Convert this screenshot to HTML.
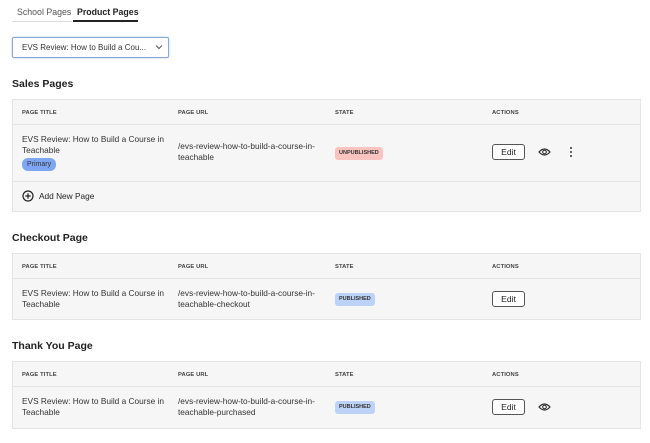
<!DOCTYPE html>
<html><head><style>
*{box-sizing:border-box;margin:0;padding:0}
body{width:650px;height:443px;background:#fff;font-family:"Liberation Sans",sans-serif;color:#222;position:relative;overflow:hidden}
.a{position:absolute}
.t{font-size:8.3px;color:#333;line-height:11px}
.h{font-size:5.8px;color:#444;letter-spacing:.1px;font-weight:bold}
.tb{position:absolute;left:12px;width:629px;background:#f6f6f6;border:1px solid #e4e4e4}
.ln{position:absolute;left:0;right:0;height:1px;background:#e4e4e4}
.sec{font-size:10.5px;font-weight:bold;color:#222}
.edit{position:absolute;width:33px;height:16px;border:1px solid #555;border-radius:3px;background:#fff;font-size:8.5px;text-align:center;line-height:14px}
.badge{position:absolute;font-size:5.5px;font-weight:bold;padding:0 4px;height:13px;line-height:13px;border-radius:3px;color:#333}
</style></head><body>
<div class="a" style="left:17px;top:7px;font-size:8.8px;color:#555">School Pages</div>
<div class="a" style="left:77px;top:7px;font-size:8.8px;font-weight:bold;color:#222">Product Pages</div>
<div class="a" style="left:12px;top:21px;width:60px;height:1px;background:#ddd"></div>
<div class="a" style="left:73px;top:20px;width:65px;height:2px;background:#222"></div>
<div class="a" style="left:12px;top:37px;width:157px;height:21px;border:1px solid #8aa6d6;border-radius:2px;box-shadow:0 0 2px #b8c8e8"></div>
<div class="a t" style="left:22px;top:42px;font-size:8px">EVS Review: How to Build a Cou...</div>
<svg class="a" style="left:155px;top:44px" width="8" height="6"><path d="M1 1.5L4 4.5 7 1.5" stroke="#555" fill="none" stroke-width="1"/></svg>

<div class="a sec" style="left:12px;top:78px">Sales Pages</div>
<div class="tb" style="top:99px;height:113px">
<div class="ln" style="top:24px"></div><div class="ln" style="top:81px"></div>
</div>
<div class="a h" style="left:22px;top:110px">PAGE TITLE</div>
<div class="a h" style="left:178px;top:110px">PAGE URL</div>
<div class="a h" style="left:335px;top:110px">STATE</div>
<div class="a h" style="left:492px;top:110px">ACTIONS</div>
<div class="a t" style="left:22px;top:134px">EVS Review: How to Build a Course in<br>Teachable</div>
<div class="badge" style="left:22px;top:158px;background:#7ea6f2;font-size:7px;font-weight:normal;border-radius:6px;padding:0 5px">Primary</div>
<div class="a t" style="left:178px;top:141px">/evs-review-how-to-build-a-course-in-<br>teachable</div>
<div class="badge" style="left:335px;top:147px;background:#f9c4c0">UNPUBLISHED</div>
<div class="edit" style="left:492px;top:144px">Edit</div>
<svg class="a" style="left:538px;top:147px" width="13" height="10"><path d="M1 5Q6.5-1 12 5Q6.5 11 1 5Z" stroke="#333" fill="none" stroke-width="1.2"/><circle cx="6.5" cy="5" r="1.8" stroke="#333" fill="none" stroke-width="1.1"/></svg>
<svg class="a" style="left:569px;top:146px" width="4" height="12"><circle cx="2" cy="2" r="1" fill="#333"/><circle cx="2" cy="6" r="1" fill="#333"/><circle cx="2" cy="10" r="1" fill="#333"/></svg>
<svg class="a" style="left:22px;top:190px" width="12" height="12"><circle cx="6" cy="6" r="5" stroke="#222" fill="none" stroke-width="1.2"/><path d="M6 3.3V8.7M3.3 6H8.7" stroke="#222" stroke-width="1.2"/></svg>
<div class="a t" style="left:39px;top:191px;color:#222">Add New Page</div>

<div class="a sec" style="left:12px;top:232px">Checkout Page</div>
<div class="tb" style="top:253px;height:67px"><div class="ln" style="top:24px"></div></div>
<div class="a h" style="left:22px;top:264px">PAGE TITLE</div>
<div class="a h" style="left:178px;top:264px">PAGE URL</div>
<div class="a h" style="left:335px;top:264px">STATE</div>
<div class="a h" style="left:492px;top:264px">ACTIONS</div>
<div class="a t" style="left:22px;top:288px">EVS Review: How to Build a Course in<br>Teachable</div>
<div class="a t" style="left:178px;top:288px">/evs-review-how-to-build-a-course-in-<br>teachable-checkout</div>
<div class="badge" style="left:335px;top:293px;background:#bcd2f7">PUBLISHED</div>
<div class="edit" style="left:492px;top:291px">Edit</div>

<div class="a sec" style="left:12px;top:340px">Thank You Page</div>
<div class="tb" style="top:361px;height:68px"><div class="ln" style="top:24px"></div></div>
<div class="a h" style="left:22px;top:372px">PAGE TITLE</div>
<div class="a h" style="left:178px;top:372px">PAGE URL</div>
<div class="a h" style="left:335px;top:372px">STATE</div>
<div class="a h" style="left:492px;top:372px">ACTIONS</div>
<div class="a t" style="left:22px;top:396px">EVS Review: How to Build a Course in<br>Teachable</div>
<div class="a t" style="left:178px;top:396px">/evs-review-how-to-build-a-course-in-<br>teachable-purchased</div>
<div class="badge" style="left:335px;top:401px;background:#bcd2f7">PUBLISHED</div>
<div class="edit" style="left:492px;top:399px">Edit</div>
<svg class="a" style="left:538px;top:402px" width="13" height="10"><path d="M1 5Q6.5-1 12 5Q6.5 11 1 5Z" stroke="#333" fill="none" stroke-width="1.2"/><circle cx="6.5" cy="5" r="1.8" stroke="#333" fill="none" stroke-width="1.1"/></svg>
</body></html>
